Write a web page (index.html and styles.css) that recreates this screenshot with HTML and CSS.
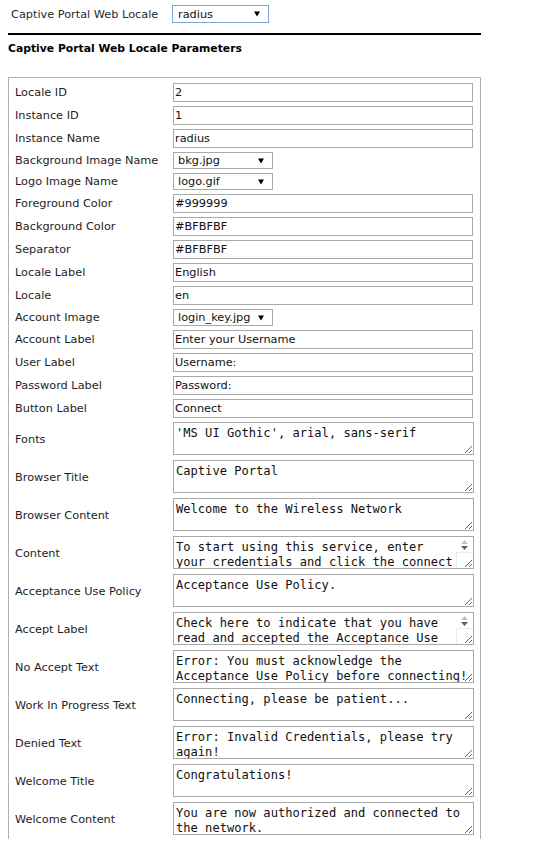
FILE: index.html
```html
<!DOCTYPE html>
<html>
<head>
<meta charset="utf-8">
<link rel="stylesheet" href="styles.css">
</head>
<body>
<div class="page">
  <div class="top">
    <span class="top-label">Captive Portal Web Locale</span>
    <div class="select select-top"><span>radius</span><svg class="arrow" width="6" height="6" viewBox="0 0 6 6"><polygon points="0,0.5 6,0.5 3,5.5" fill="#000"/></svg></div>
  </div>
  <hr class="rule">
  <h2 class="heading">Captive Portal Web Locale Parameters</h2>
  <div class="box">
    <div class="form">
      <label class="lbl">Locale ID</label><input class="txt" type="text" value="2">
      <label class="lbl">Instance ID</label><input class="txt" type="text" value="1">
      <label class="lbl">Instance Name</label><input class="txt" type="text" value="radius">
      <label class="lbl">Background Image Name</label><div class="select"><span>bkg.jpg</span><svg class="arrow" width="6" height="6" viewBox="0 0 6 6"><polygon points="0,0.5 6,0.5 3,5.5" fill="#000"/></svg></div>
      <label class="lbl">Logo Image Name</label><div class="select"><span>logo.gif</span><svg class="arrow" width="6" height="6" viewBox="0 0 6 6"><polygon points="0,0.5 6,0.5 3,5.5" fill="#000"/></svg></div>
      <label class="lbl">Foreground Color</label><input class="txt" type="text" value="#999999">
      <label class="lbl">Background Color</label><input class="txt" type="text" value="#BFBFBF">
      <label class="lbl">Separator</label><input class="txt" type="text" value="#BFBFBF">
      <label class="lbl">Locale Label</label><input class="txt" type="text" value="English">
      <label class="lbl">Locale</label><input class="txt" type="text" value="en">
      <label class="lbl">Account Image</label><div class="select"><span>login_key.jpg</span><svg class="arrow" width="6" height="6" viewBox="0 0 6 6"><polygon points="0,0.5 6,0.5 3,5.5" fill="#000"/></svg></div>
      <label class="lbl">Account Label</label><input class="txt" type="text" value="Enter your Username">
      <label class="lbl">User Label</label><input class="txt" type="text" value="Username:">
      <label class="lbl">Password Label</label><input class="txt" type="text" value="Password:">
      <label class="lbl">Button Label</label><input class="txt" type="text" value="Connect">
      <label class="lbl">Fonts</label><textarea class="area">'MS UI Gothic', arial, sans-serif</textarea>
      <label class="lbl">Browser Title</label><textarea class="area">Captive Portal</textarea>
      <label class="lbl">Browser Content</label><textarea class="area">Welcome to the Wireless Network</textarea>
      <label class="lbl">Content</label>
      <div class="area-wrap">
        <textarea class="area area-scroll">To start using this service, enter your credentials and click the connect button.</textarea>
        <div class="fake-scroll">
          <div class="sb-buttons">
            <svg width="7" height="4" viewBox="0 0 7 4"><polygon points="0,4 7,4 3.5,0" fill="#c4c4c4"/></svg>
            <svg width="7" height="4" viewBox="0 0 7 4"><polygon points="0,0 7,0 3.5,4" fill="#606060"/></svg>
          </div>
          <div class="sb-corner"></div>
        </div>
      </div>
      <label class="lbl">Acceptance Use Policy</label><textarea class="area">Acceptance Use Policy.</textarea>
      <label class="lbl">Accept Label</label>
      <div class="area-wrap">
        <textarea class="area area-scroll">Check here to indicate that you have read and accepted the Acceptance Use Policy.</textarea>
        <div class="fake-scroll">
          <div class="sb-buttons">
            <svg width="7" height="4" viewBox="0 0 7 4"><polygon points="0,4 7,4 3.5,0" fill="#c4c4c4"/></svg>
            <svg width="7" height="4" viewBox="0 0 7 4"><polygon points="0,0 7,0 3.5,4" fill="#606060"/></svg>
          </div>
          <div class="sb-corner"></div>
        </div>
      </div>
      <label class="lbl">No Accept Text</label><textarea class="area">Error: You must acknowledge the Acceptance Use Policy before connecting!</textarea>
      <label class="lbl">Work In Progress Text</label><textarea class="area">Connecting, please be patient...</textarea>
      <label class="lbl">Denied Text</label><textarea class="area">Error: Invalid Credentials, please try again!</textarea>
      <label class="lbl">Welcome Title</label><textarea class="area">Congratulations!</textarea>
      <label class="lbl">Welcome Content</label><textarea class="area">You are now authorized and connected to the network.</textarea>
    </div>
  </div>
</div>
</body>
</html>
```
FILE: styles.css
```css
html, body {
  margin: 0;
  padding: 0;
  background: #fff;
}
body {
  font-family: "DejaVu Sans", Verdana, sans-serif;
  font-size: 11.3px;
  color: #1e1e1e;
}
.page {
  width: 473px;
  padding: 5px 0 0 8px;
}
.top {
  display: flex;
  align-items: center;
  height: 18px;
}
.top-label {
  width: 161px;
  padding-left: 3px;
  color: #2a2a2a;
  line-height: 13px;
}
.select {
  box-sizing: border-box;
  display: flex;
  align-items: center;
  justify-content: space-between;
  width: 100px;
  height: 17px;
  margin: 2px 0;
  padding: 0 8px 0 4px;
  border: 1px solid #a9a9a9;
  background: #fff;
  color: #111;
  line-height: 13px;
}
.select-top {
  width: 97px;
  height: 18px;
  margin: 0;
  padding: 0 8px 0 5px;
  border-color: #7ea6dc;
}
.arrow {
  display: block;
  flex: none;
}
.rule {
  margin: 10px 0 0;
  border: 0;
  height: 2px;
  background: #000;
}
.heading {
  margin: 7px 0 0;
  font-size: 10.8px;
  line-height: 13px;
  font-weight: bold;
  color: #000;
}
.box {
  margin-top: 22px;
  border: 1px solid #abb1bf;
  border-bottom: none;
  padding: 3px 0 1px;
}
.form {
  display: grid;
  grid-template-columns: 164px 1fr;
  align-items: center;
}
.lbl {
  padding-left: 6px;
  line-height: 13px;
  color: #1e1e1e;
}
.txt {
  box-sizing: border-box;
  display: block;
  width: 300px;
  height: 19px;
  margin: 2px 0;
  padding: 0 1px;
  border: 1px solid #a9a9a9;
  border-radius: 0;
  outline: none;
  background: #fff;
  font-family: "DejaVu Sans", Verdana, sans-serif;
  font-size: 11.3px;
  color: #111;
}
.area {
  box-sizing: border-box;
  display: block;
  width: 301px;
  height: 33px;
  margin: 2px 0 3px;
  padding: 3px 2px 0;
  border: 1px solid #a9a9a9;
  border-radius: 0;
  outline: none;
  overflow: hidden;
  resize: both;
  background: #fff;
  font-family: "DejaVu Sans Mono", "Liberation Mono", monospace;
  font-size: 12.1px;
  line-height: 15px;
  color: #111;
}
.area-wrap {
  position: relative;
  width: 301px;
}
.area-scroll {
  padding-right: 16px;
}
.fake-scroll {
  position: absolute;
  top: 3px;
  right: 1px;
  bottom: 4px;
  width: 17px;
  display: flex;
  flex-direction: column;
}
.sb-buttons {
  display: flex;
  flex-direction: column;
  align-items: center;
  gap: 2px;
  padding-top: 3px;
  height: 12px;
  background: #fff;
}
.sb-buttons svg {
  display: block;
}
.sb-corner {
  flex: 1;
  border-left: 1px solid #ececec;
  border-top: 1px solid #ececec;
}
```
